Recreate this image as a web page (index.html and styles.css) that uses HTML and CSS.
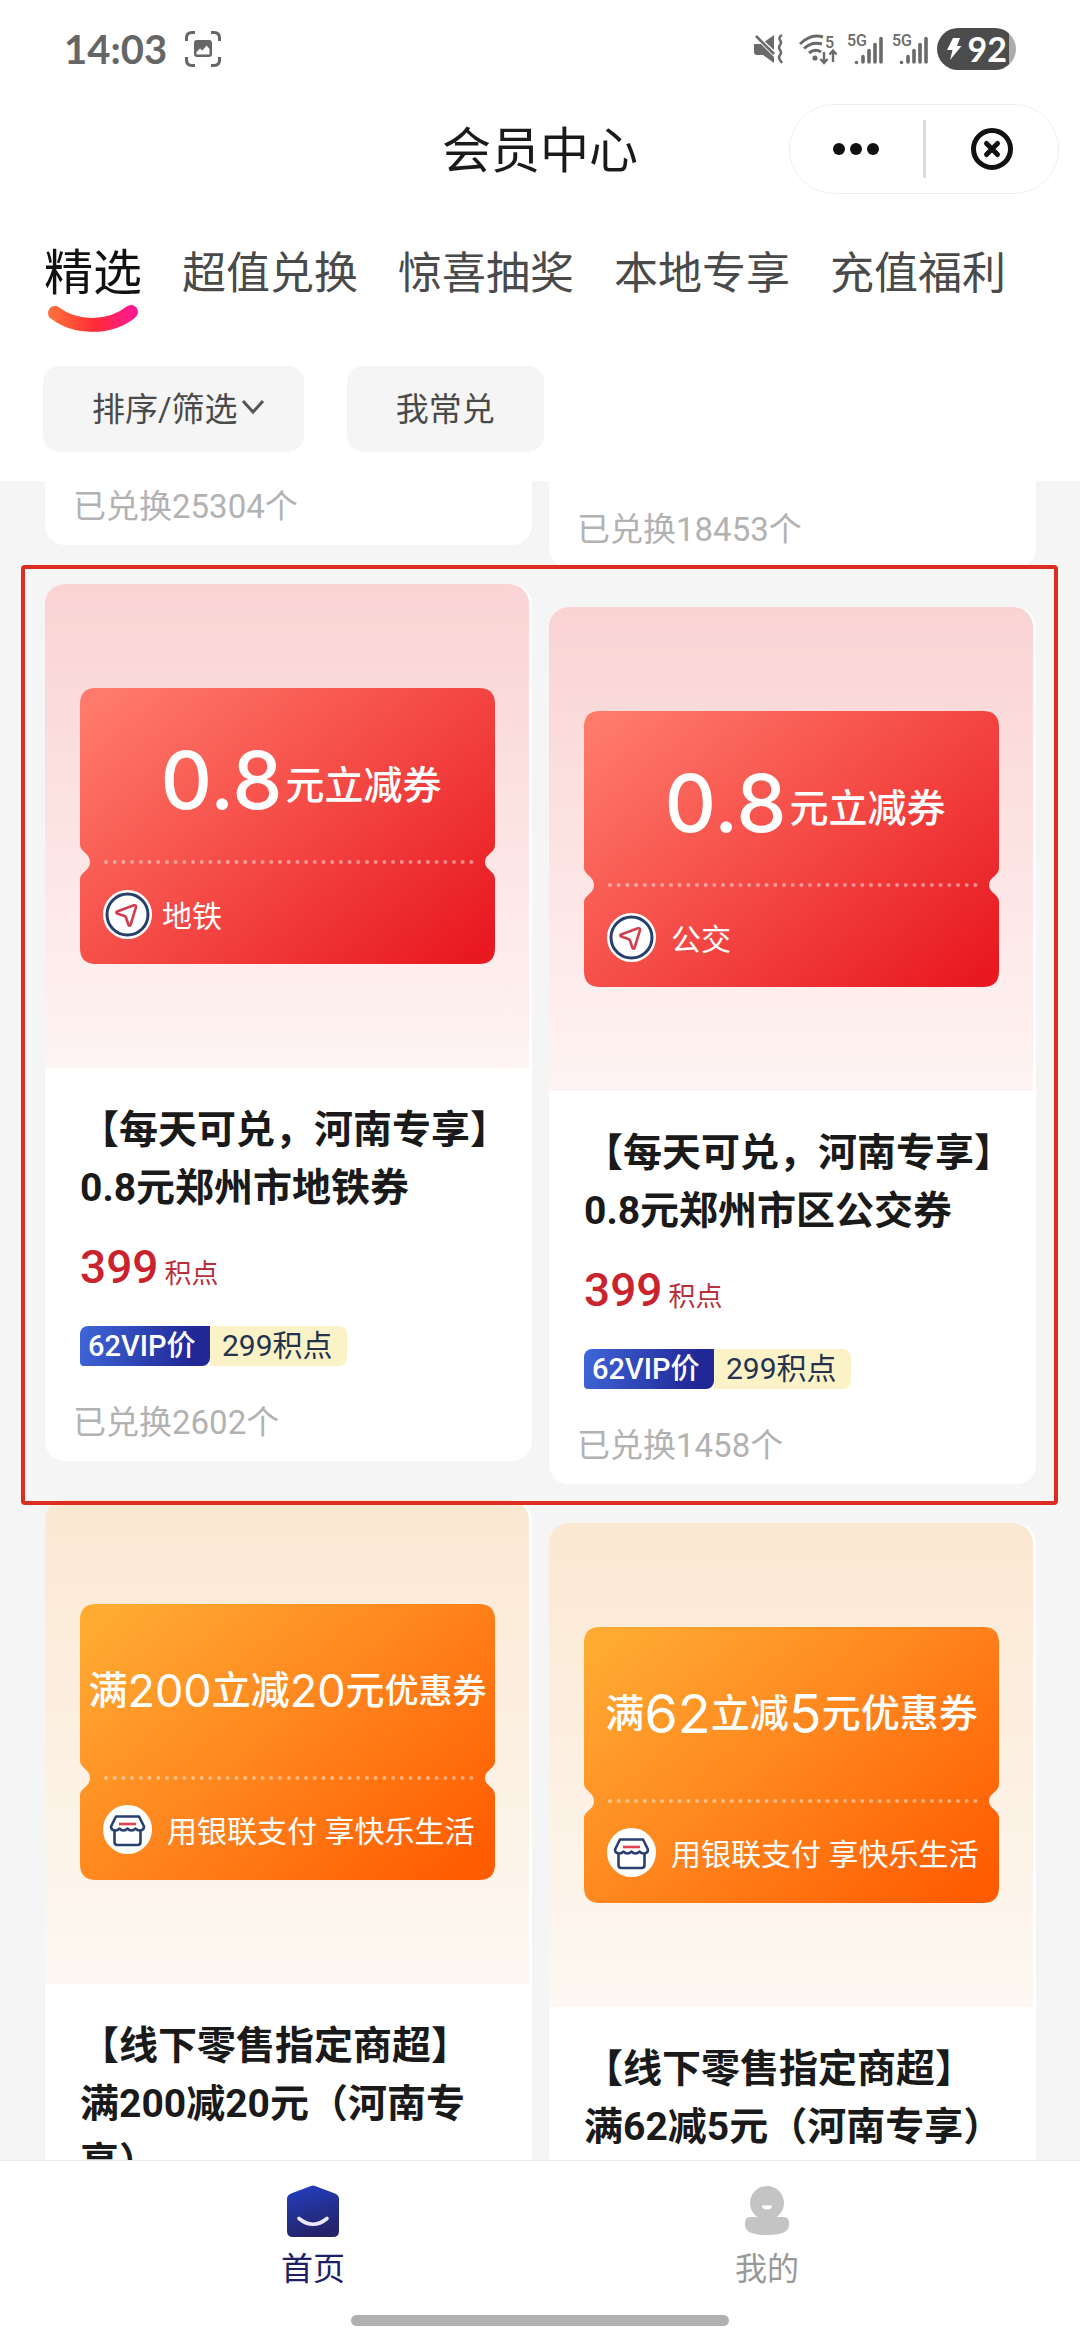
FILE: index.html
```html
<!DOCTYPE html>
<html lang="zh-CN">
<head>
<meta charset="utf-8">
<meta name="viewport" content="width=device-width, initial-scale=1">
<title>会员中心</title>
<link rel="stylesheet" href="styles.css">
</head>
<body>
<svg class="defs" width="0" height="0" aria-hidden="true">
  <defs>
    <linearGradient id="red" x1="0" y1="0.1" x2="1" y2="0.9">
      <stop offset="0" stop-color="#ff7a6b"/><stop offset="0.5" stop-color="#f44a45"/><stop offset="1" stop-color="#e81920"/>
    </linearGradient>
    <linearGradient id="orange" x1="0" y1="0.1" x2="1" y2="0.9">
      <stop offset="0" stop-color="#ffab32"/><stop offset="0.5" stop-color="#ff841d"/><stop offset="1" stop-color="#ff5b00"/>
    </linearGradient>
    <linearGradient id="smile" x1="0" y1="0" x2="1" y2="0">
      <stop offset="0" stop-color="#ff6a3a"/><stop offset="0.55" stop-color="#ff2a38"/><stop offset="1" stop-color="#ff1a8c"/>
    </linearGradient>
    <linearGradient id="home" x1="0" y1="0" x2="0.3" y2="1">
      <stop offset="0" stop-color="#2240c4"/><stop offset="1" stop-color="#25246b"/>
    </linearGradient>
    <path id="ticket-shape" d="M16 0H399Q415 0 415 16V157C415 165 405 166 405 174S415 183 415 191V260Q415 276 399 276H16Q0 276 0 260V191C0 184 10 183 10 174S0 164 0 157V16Q0 0 16 0Z"/>
    <path id="ticket-dots" d="M26 174H393" fill="none" stroke="#fff" stroke-opacity="0.45" stroke-width="4" stroke-linecap="round" stroke-dasharray="0 8.7"/>
    <symbol id="plane" viewBox="0 0 49 49">
      <circle cx="24.500" cy="24.500" r="24.500" fill="#fff"/>
      <circle cx="24.500" cy="24.500" r="20.500" fill="none" stroke="#26406b" stroke-width="3"/>
      <path d="M14 21.500Q12.500 22.500 14 23.500L21.500 26Q22.500 26.500 23 27.500L25.500 35Q26.500 36.500 27.500 35L33 17Q33.300 14.800 31 15.300Z" fill="none" stroke="#d2404f" stroke-width="2.600" stroke-linejoin="round"/>
    </symbol>
    <symbol id="shop" viewBox="0 0 49 49">
      <circle cx="24.500" cy="24.500" r="24.500" fill="#fff"/>
      <path d="M13 11.500H36L41 21.500Q41 25 37 25.500Q34 25.500 32.500 23.500Q31 25.500 28.500 25.500Q26 25.500 24.500 23.500Q23 25.500 20.500 25.500Q18 25.500 16.500 23.500Q15 25.500 12 25.500Q8 25 8 21.500Z" fill="none" stroke="#2b3f70" stroke-width="2.600" stroke-linejoin="round"/>
      <path d="M11.500 26V37Q11.500 40 14.500 40H34.500Q37.500 40 37.500 37V26" fill="none" stroke="#2b3f70" stroke-width="2.600"/>
      <path d="M16 19H33" stroke="#e0434d" stroke-width="2.600"/>
    </symbol>
    <symbol id="signal" viewBox="0 0 36 34">
      <path d="M9.500 30.500V30.500M16 30V24.500M22 30V18.500M28 30V12.500M34 30V6.500" fill="none" stroke="#6a6a6a" stroke-width="3.600" stroke-linecap="round"/>
    </symbol>
  </defs>
</svg>

<div class="app">
  <header class="top">
    <div class="status">
      <span class="time">14:03</span>
      <svg class="shot" width="36" height="36" viewBox="0 0 36 36" aria-hidden="true">
        <path d="M1.500 10V7Q1.500 1.500 7 1.500H10M26 1.500H29Q34.500 1.500 34.500 7V10M34.500 26V29Q34.500 34.500 29 34.500H26M10 34.500H7Q1.500 34.500 1.500 29V26" fill="none" stroke="#666" stroke-width="3"/>
        <path fill-rule="evenodd" fill="#666" d="M12 9H24Q27 9 27 12V23Q27 26 24 26H12Q9 26 9 23V12Q9 9 12 9ZM11.500 23.500H24.500V18L21.500 14.500L17.500 19.500L15 17.500L11.500 21Z"/>
      </svg>
      <div class="status-icons">
        <svg width="32" height="32" viewBox="0 0 32 32" aria-hidden="true">
          <path d="M1 11H8L21 24V30L10 22H4Q1 22 1 19Z" fill="#6a6a6a"/>
          <path d="M21 2V17L12 8.500Z" fill="#6a6a6a"/>
          <path d="M3 3L21 21" stroke="#6a6a6a" stroke-width="2.600"/>
          <path d="M29 2Q25 4.500 27 7T27 12T27 17T27 22T27 27L29 30" fill="none" stroke="#6a6a6a" stroke-width="2.400"/>
        </svg>
        <svg class="wifi" width="40" height="32" viewBox="0 0 40 32" aria-hidden="true">
          <path d="M2 11Q13 0 25 4M6 15.500Q14 8 24 11M11 20Q17 15 23 19" fill="none" stroke="#6a6a6a" stroke-width="3"/>
          <circle cx="17" cy="25" r="2.600" fill="#6a6a6a"/>
          <path d="M26 19V29M22.500 26L26 30L29.500 26M35 29V18M31.500 21.500L35 17.500L38.500 21.500" fill="none" stroke="#6a6a6a" stroke-width="2.400"/>
          <text x="27" y="15" class="net">5</text>
        </svg>
        <svg width="36" height="34" viewBox="0 0 36 34" aria-hidden="true"><use href="#signal"/><text x="0" y="14" class="net">5G</text></svg>
        <svg width="36" height="34" viewBox="0 0 36 34" aria-hidden="true"><use href="#signal"/><text x="0" y="14" class="net">5G</text></svg>
        <span class="battery">
          <svg width="16" height="24" viewBox="0 0 16 24" aria-hidden="true"><path d="M7 1H14L11 9H15.500L4 23L6.500 13H1Z" fill="#fff"/></svg>92
        </span>
      </div>
    </div>

    <div class="titlebar">
      <h1 class="title">会员中心</h1>
      <div class="capsule">
        <button class="cap-btn" type="button" aria-label="更多">
          <svg width="48" height="14" viewBox="0 0 48 14"><circle cx="7" cy="7" r="6" fill="#111"/><circle cx="24" cy="7" r="6" fill="#111"/><circle cx="41" cy="7" r="6" fill="#111"/></svg>
        </button>
        <span class="cap-line"></span>
        <button class="cap-btn" type="button" aria-label="关闭">
          <svg width="44" height="44" viewBox="0 0 44 44" fill="none" stroke="#111" stroke-width="5"><circle cx="22" cy="22" r="18.500"/><path d="M16.500 16.500L27.500 27.500M27.500 16.500L16.500 27.500" stroke-linecap="round"/></svg>
        </button>
      </div>
    </div>

    <nav class="tabs">
      <button class="tab tab-active" type="button">精选
        <svg width="90" height="30" viewBox="0 0 90 30" aria-hidden="true"><path d="M7 9C28 25 62 25 83 8" fill="none" stroke="url(#smile)" stroke-width="14" stroke-linecap="round"/></svg>
      </button>
      <button class="tab" type="button">超值兑换</button>
      <button class="tab" type="button">惊喜抽奖</button>
      <button class="tab" type="button">本地专享</button>
      <button class="tab" type="button">充值福利</button>
    </nav>

    <div class="filters">
      <button class="filter" type="button">排序/筛选<svg width="26" height="20" viewBox="0 0 26 20" aria-hidden="true"><path d="M3 4L13 15L23 4" fill="none" stroke="#555" stroke-width="3"/></svg></button>
      <button class="filter" type="button">我常兑</button>
    </div>
  </header>

  <main class="feed">
    <div class="column">
      <article class="card card-tail"><p class="sold">已兑换25304个</p></article>

      <article class="card">
        <div class="cover cover-red">
          <div class="ticket">
            <svg class="ticket-bg" viewBox="0 0 415 276" preserveAspectRatio="none" aria-hidden="true"><use href="#ticket-shape" fill="url(#red)"/><use href="#ticket-dots"/></svg>
            <p class="amount amount-red"><span class="num-xl">0.8</span><span class="unit">元立减券</span></p>
            <p class="foot foot-tight"><svg width="49" height="49" aria-hidden="true"><use href="#plane"/></svg>地铁</p>
          </div>
        </div>
        <div class="info">
          <h2 class="name">【每天可兑，河南专享】<br>0.8元郑州市地铁券</h2>
          <p class="price"><strong class="points">399</strong>积点</p>
          <p class="vip"><span class="vip-label">62VIP价</span><span class="vip-price">299积点</span></p>
        </div>
        <p class="sold">已兑换2602个</p>
      </article>

      <article class="card">
        <div class="cover cover-orange">
          <div class="ticket">
            <svg class="ticket-bg" viewBox="0 0 415 276" preserveAspectRatio="none" aria-hidden="true"><use href="#ticket-shape" fill="url(#orange)"/><use href="#ticket-dots"/></svg>
            <p class="amount">满<span class="num-m">200</span>立减<span class="num-m">20</span>元<span class="small">优惠券</span></p>
            <p class="foot"><svg width="49" height="49" aria-hidden="true"><use href="#shop"/></svg>用银联支付 享快乐生活</p>
          </div>
        </div>
        <div class="info">
          <h2 class="name">【线下零售指定商超】<br>满200减20元（河南专享）</h2>
        </div>
      </article>
    </div>

    <div class="column column-right">
      <article class="card card-tail"><p class="sold">已兑换18453个</p></article>

      <article class="card">
        <div class="cover cover-red">
          <div class="ticket">
            <svg class="ticket-bg" viewBox="0 0 415 276" preserveAspectRatio="none" aria-hidden="true"><use href="#ticket-shape" fill="url(#red)"/><use href="#ticket-dots"/></svg>
            <p class="amount amount-red"><span class="num-xl">0.8</span><span class="unit">元立减券</span></p>
            <p class="foot"><svg width="49" height="49" aria-hidden="true"><use href="#plane"/></svg>公交</p>
          </div>
        </div>
        <div class="info">
          <h2 class="name">【每天可兑，河南专享】<br>0.8元郑州市区公交券</h2>
          <p class="price"><strong class="points">399</strong>积点</p>
          <p class="vip"><span class="vip-label">62VIP价</span><span class="vip-price">299积点</span></p>
        </div>
        <p class="sold">已兑换1458个</p>
      </article>

      <article class="card">
        <div class="cover cover-orange">
          <div class="ticket">
            <svg class="ticket-bg" viewBox="0 0 415 276" preserveAspectRatio="none" aria-hidden="true"><use href="#ticket-shape" fill="url(#orange)"/><use href="#ticket-dots"/></svg>
            <p class="amount">满<span class="num-l">62</span>立减<span class="num-l">5</span>元优惠券</p>
            <p class="foot"><svg width="49" height="49" aria-hidden="true"><use href="#shop"/></svg>用银联支付 享快乐生活</p>
          </div>
        </div>
        <div class="info">
          <h2 class="name">【线下零售指定商超】<br>满62减5元（河南专享）</h2>
        </div>
      </article>
    </div>
    <div class="marker" aria-hidden="true"></div>
  </main>

  <footer class="bottom">
    <nav class="nav">
      <a class="nav-item nav-active" href="#home">
        <svg width="52" height="52" viewBox="0 0 52 52" aria-hidden="true"><path d="M24 1Q26 0 28 1L48 8.500Q52 10 52 14V46Q52 52 46 52H6Q0 52 0 46V14Q0 10 4 8.500Z" fill="url(#home)"/><path d="M12 33.500Q26 45 40 33.500" fill="none" stroke="#ece8fb" stroke-width="3.600" stroke-linecap="round"/></svg>
        首页
      </a>
      <a class="nav-item" href="#mine">
        <svg width="52" height="52" viewBox="0 0 52 52" aria-hidden="true"><circle cx="26" cy="18" r="17" fill="#c4c4c4"/><path d="M9 32H43Q48 32 48 38V40Q48 50 26 50T4 40V38Q4 32 9 32Z" fill="#c4c4c4"/><path d="M21 20.500H31Q31 24.500 26 24.500T21 20.500Z" fill="#fff"/></svg>
        我的
      </a>
    </nav>
    <div class="home-bar"></div>
  </footer>
</div>
</body>
</html>
```
FILE: styles.css
```css
* { box-sizing: border-box; }

body {
  margin: 0;
  background: #fff;
  color: #1a1a1a;
  font-family: Roboto, "Noto Sans CJK SC", sans-serif;
}

h1, h2, p { margin: 0; }

button {
  border: 0;
  padding: 0;
  background: none;
  color: inherit;
  font: inherit;
}

svg { display: block; flex: none; overflow: visible; }
.defs { position: absolute; }

.app {
  display: flex;
  flex-direction: column;
  height: 100vh;
  overflow: hidden;
}

/* Status bar */
.status {
  display: flex;
  align-items: center;
  height: 98px;
  padding: 0 64px;
}
.time {
  color: #666;
  font: 700 40px/48px Lato, Roboto, sans-serif;
}
.shot { margin-left: 18px; }
.status-icons {
  display: flex;
  align-items: center;
  gap: 9px;
  margin-left: auto;
}
.wifi { margin-left: 4px; }
.net {
  fill: #6a6a6a;
  font: 500 16px Roboto, sans-serif;
}
.battery {
  display: flex;
  align-items: center;
  gap: 6px;
  height: 42px;
  padding: 0 9px 0 9px;
  border-radius: 21px;
  background: linear-gradient(90deg, #4c4c4c 72px, #ababab 72px);
  color: #fff;
  font: 700 34px/42px Lato, Roboto, sans-serif;
}

/* Title bar */
.titlebar {
  display: grid;
  grid-template-columns: 1fr auto 1fr;
  align-items: center;
  padding: 6px 21px 0;
}
.title {
  grid-column: 2;
  padding-top: 6px;
  font-size: 49px;
  font-weight: 400;
  line-height: 60px;
}
.capsule {
  justify-self: end;
  display: flex;
  align-items: center;
  width: 270px;
  height: 90px;
  border: 1px solid #efefef;
  border-radius: 45px;
}
.cap-btn {
  flex: 1;
  display: flex;
  justify-content: center;
}
.cap-line {
  width: 3px;
  height: 58px;
  background: #dcdcdc;
}

/* Category tabs */
.tabs {
  display: flex;
  align-items: flex-start;
  gap: 40px;
  padding: 50px 44px 32px;
}
.tab {
  color: #4a4a4a;
  font-size: 44px;
  line-height: 60px;
  white-space: nowrap;
}
.tab-active {
  display: flex;
  flex-direction: column;
  align-items: center;
  color: #111;
  font-size: 49px;
}

.filters {
  display: flex;
  gap: 43px;
  padding: 0 43px 29px;
}
.filter {
  display: flex;
  align-items: center;
  gap: 2px;
  height: 86px;
  padding: 0 49px 5px;
  border-radius: 16px;
  background: #f5f5f5;
  color: #4a4a4a;
  font-size: 33px;
}
.filter:first-child { padding-right: 38px; }

/* Product feed */
.feed {
  position: relative;
  flex: 1;
  min-height: 0;
  display: grid;
  grid-template-columns: 1fr 1fr;
  gap: 17px;
  padding: 0 44px 0 45px;
  background: #f5f5f5;
  overflow: hidden;
}
.column {
  display: flex;
  flex-direction: column;
  gap: 39px;
}
.card {
  flex: none;
  padding-bottom: 18px;
  border-radius: 20px;
  background: #fff;
  overflow: hidden;
}
.card-tail {
  padding-top: 6px;
  border-radius: 0 0 20px 20px;
}
.column-right .card-tail { padding-top: 29px; }

.cover {
  display: flex;
  align-items: center;
  margin-right: 3px;
  padding: 0 34px 0 35px;
  aspect-ratio: 1;
  border-top-right-radius: 20px;
}
.cover-red { background: linear-gradient(#fad3d3, #fef4f3); }
.cover-orange { background: linear-gradient(#fbe8d2, #fdf8f2); }

.ticket {
  position: relative;
  display: flex;
  flex-direction: column;
  width: 100%;
  aspect-ratio: 415 / 276;
  color: #fff;
  white-space: nowrap;
}
.ticket-bg {
  position: absolute;
  inset: 0;
  width: 100%;
  height: 100%;
}
.amount {
  position: relative;
  flex: 174;
  display: flex;
  align-items: center;
  justify-content: center;
  font-size: 39px;
  font-weight: 500;
  line-height: 60px;
}
.amount-red {
  gap: 3px;
  padding: 7px 0 0 27px;
}
.num-xl { font: 500 80px/80px Inter, sans-serif; }
.num-l { font: 400 54px/60px Inter, sans-serif; }
.num-m { font: 400 45px/60px Inter, sans-serif; }
.unit { padding-top: 12px; }
.small { font-size: 34px; }
.foot {
  position: relative;
  flex: 102;
  display: flex;
  align-items: center;
  gap: 15px;
  padding-left: 23px;
  font-size: 30px;
}
.foot-tight { gap: 10px; }

.info { padding: 33px 20px 0 35px; }
.name {
  font-size: 39px;
  font-weight: 700;
  line-height: 58px;
}
.price {
  display: flex;
  align-items: baseline;
  gap: 6px;
  height: 60px;
  margin-top: 20px;
  color: #b8303b;
  font-size: 27px;
  line-height: 60px;
}
.points {
  color: #c9232e;
  font-size: 46px;
  font-weight: 500;
}
.vip {
  display: flex;
  margin-top: 29px;
  font-size: 30px;
  line-height: 40px;
}
.vip-label {
  width: 130px;
  padding-left: 8px;
  border-radius: 8px 0 8px 4px;
  background: linear-gradient(100deg, #3f66d8, #212896 85%);
  color: #fff;
  font-size: 29px;
  font-weight: 500;
}
.vip-price {
  padding: 0 14px 0 12px;
  border-radius: 0 8px 8px 0;
  background: #fcf2c8;
  color: #22324f;
}
.sold {
  padding-left: 28px;
  color: #b2b2b2;
  font-size: 33px;
  line-height: 40px;
}
.info + .sold { margin-top: 37px; }

/* Highlight frame around the transit coupons */
.marker {
  position: absolute;
  top: 84px;
  left: 21px;
  right: 22px;
  height: 940px;
  border: 4px solid #dc2d23;
  border-radius: 4px;
}

/* Bottom navigation */
.bottom {
  border-top: 1px solid #ececec;
  background: #fff;
}
.nav {
  display: flex;
  padding: 24px 86px 0;
}
.nav-item {
  flex: 1;
  display: flex;
  flex-direction: column;
  align-items: center;
  gap: 11px;
  color: #999;
  font-size: 32px;
  line-height: 42px;
  text-decoration: none;
}
.nav-active { color: #1d2066; }
.home-bar {
  width: 35%;
  height: 11px;
  margin: 25px auto 14px;
  border-radius: 6px;
  background: #b0b0b0;
}
```
